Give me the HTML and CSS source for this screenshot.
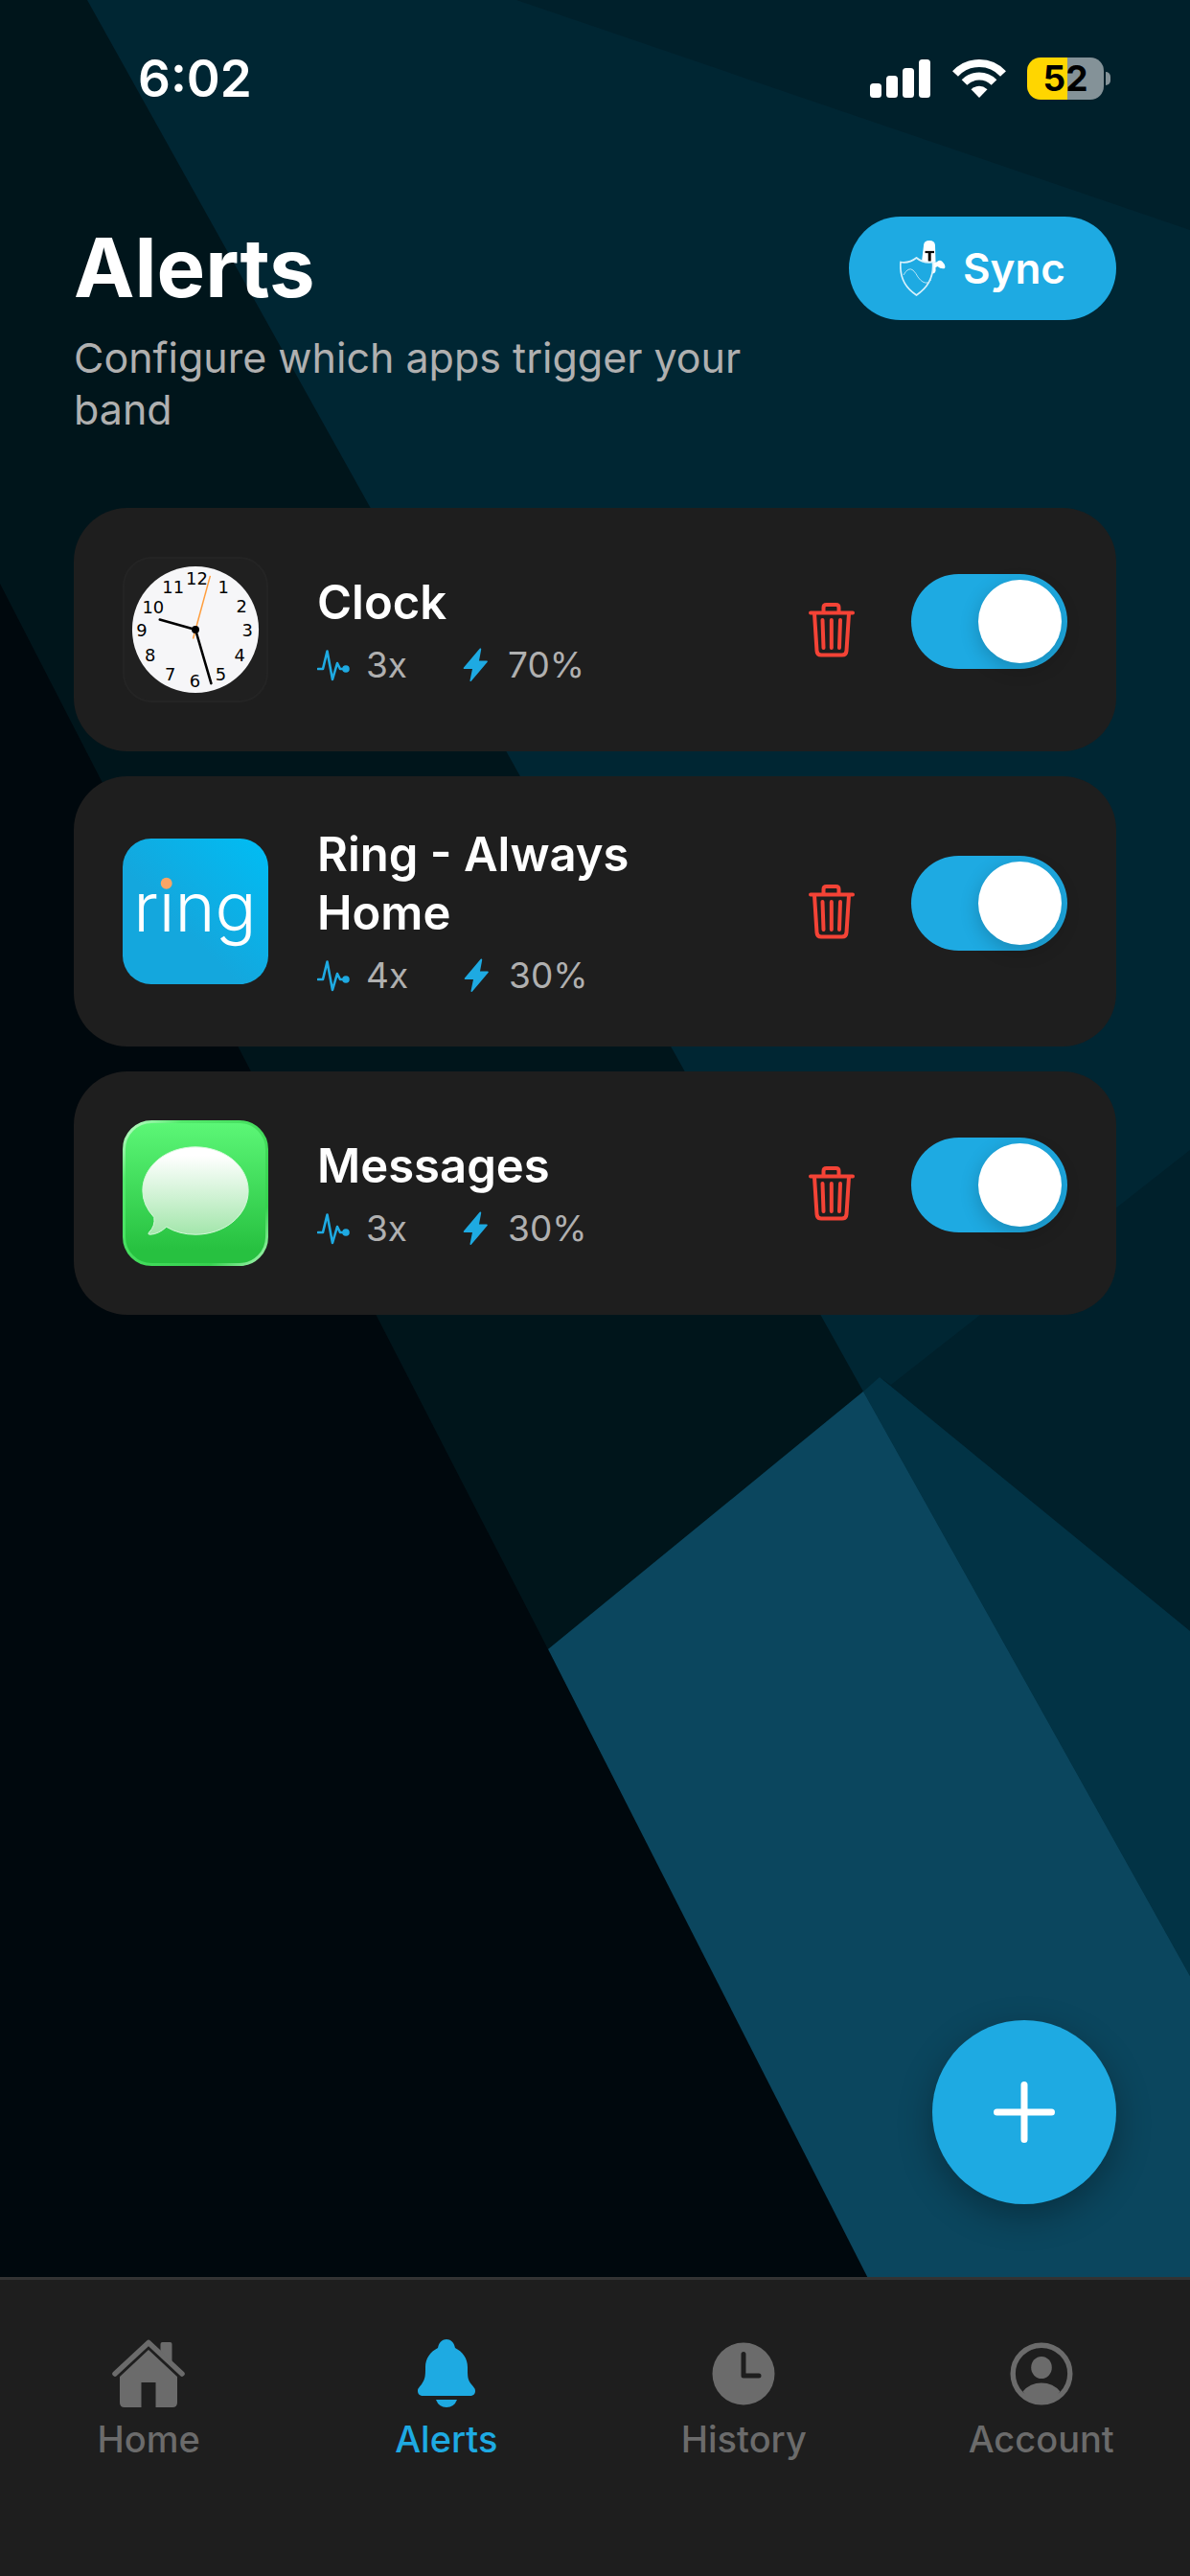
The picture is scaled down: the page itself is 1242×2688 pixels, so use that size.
FILE: index.html
```
<!DOCTYPE html>
<html lang="en">

<head>
    <meta charset="UTF-8">
    <meta name="viewport" content="width=device-width, initial-scale=1.0">
    <title>Alerts</title>
    <link rel="stylesheet" href="styles.css">
</head>

<body>

    <!-- Background facets -->
    <svg class="backdrop" viewBox="0 0 1242 2688" preserveAspectRatio="none" aria-hidden="true">
        <rect width="1242" height="2688" fill="#002633" />
        <polygon points="539,0 1242,0 1242,240" fill="#00202b" />
        <polygon points="918,1437 930,1445 1242,1200 1242,1702" fill="#00202b" />
        <polygon points="0,0 91,0 901,1452 572,1721 0,900" fill="#00151b" />
        <polygon points="901,1452 918,1437 1242,1702 1242,2062" fill="#023345" />
        <polygon points="572,1721 901,1452 1242,2062 1242,2688 1060,2688" fill="#0b465e" />
        <polygon points="0,609 572,1721 1064,2688 0,2688" fill="#00080d" />
    </svg>

    <!-- Shared icons -->
    <svg class="icon-defs" aria-hidden="true">
        <symbol id="icon-pulse" viewBox="0 0 34 36">
            <path d="M1 22h5l4.500-18.500L16 33l5-17 3 6h6" fill="none" stroke="currentColor" stroke-width="2.600" stroke-linecap="round" stroke-linejoin="round" />
            <circle cx="30" cy="22" r="3.800" fill="currentColor" />
        </symbol>
        <symbol id="icon-bolt" viewBox="0 0 34 36">
            <path d="M21.500 1L5 20.500c-.6.8-.3 1.500.7 1.500H14l-2.500 12c-.2 1.200.8 1.500 1.500.6L29.500 15c.7-.8.3-1.500-.7-1.500H21L23.200 1.800C23.400.6 22.300 0 21.500 1z" fill="currentColor" />
        </symbol>
        <symbol id="icon-trash" viewBox="0 0 48 57">
            <g fill="none" stroke="currentColor" stroke-width="4" stroke-linecap="round" stroke-linejoin="round">
                <path d="M2 10.500h44" />
                <path d="M15.500 10V5q0-3 3-3h10q3 0 3 3v5" />
                <path d="M6 11l2.500 39q.3 4.500 4.500 4.500h22q4.200 0 4.500-4.500L42 11" />
                <path d="M14.500 18l1 29M23.800 18v29M33 18l-1 29" />
            </g>
        </symbol>
    </svg>

    <div class="status-bar">
        <time class="status-time">6:02</time>
        <div class="status-icons">
            <svg width="64" height="42" viewBox="0 0 64 42" fill="#fff" aria-hidden="true">
                <rect x="0" y="26" width="12" height="15" rx="3.500" />
                <rect x="17" y="18" width="12" height="23" rx="3.500" />
                <rect x="34" y="10" width="12" height="31" rx="3.500" />
                <rect x="51" y="1" width="12" height="40" rx="3.500" />
            </svg>
            <svg width="56" height="42" viewBox="0 0 56 42" aria-hidden="true">
                <g fill="none" stroke="#fff" stroke-width="8">
                    <path d="M3 16Q13 5 28 5t25 11" />
                    <path d="M12.500 25Q19 18.500 28 18.500T43.500 25" />
                </g>
                <path d="M28 41l-8.500-8.800Q28 25.500 36.500 32.200z" fill="#fff" />
            </svg>
            <div class="battery">52</div>
        </div>
    </div>

    <header class="page-header">
        <div class="page-heading">
            <h1>Alerts</h1>
            <p>Configure which apps trigger your band</p>
        </div>
        <button class="sync-button" type="button">
            <svg width="48" height="58" viewBox="0 0 48 58" aria-hidden="true">
                <path d="M25 5.500Q25 0 31 0t6 5.500L37.500 22H23z" fill="#fff" />
                <path d="M26.500 12h9.500" stroke="#0a0a0a" stroke-width="2.200" />
                <path d="M31.200 12v9.500" stroke="#0a0a0a" stroke-width="3" />
                <path d="M35 22l3.500.5q3-3 6-.5 4 4 2.500 7-4 1-7.500-2l-2 1v4q-1 3-4 2.500z" fill="#fff" />
                <path d="M1 22.500q9 1.500 16.500-4.500 7 6 17 4.500 2 22-17 34.500Q-1 45 1 22.500z" fill="#1eaae2" stroke="#d8f1fb" stroke-width="1.700" />
                <path d="M4 36q5-9 10-5 3 3 5 7 5 7 10 6l4-3" fill="none" stroke="#b5e4f6" stroke-width="1" />
            </svg>
            Sync
        </button>
    </header>

    <main class="content">
        <ul class="alert-list">
            <li class="alert-card">
                <svg class="app-icon" viewBox="0 0 153 153" aria-hidden="true">
                    <rect x="1" y="1" width="151" height="151" rx="30" fill="#202020" stroke="#242424" stroke-width="2" />
                    <circle cx="76.500" cy="76.500" r="66.500" fill="#f6f6f8" />
                    <g class="clock-numbers">
                        <text x="78" y="29">12</text>
                        <text x="106" y="38">1</text>
                        <text x="125" y="58">2</text>
                        <text x="131" y="84">3</text>
                        <text x="123" y="110">4</text>
                        <text x="103" y="130">5</text>
                        <text x="76" y="137">6</text>
                        <text x="50" y="130">7</text>
                        <text x="29" y="110">8</text>
                        <text x="20" y="84">9</text>
                        <text x="32" y="59">10</text>
                        <text x="53" y="38">11</text>
                    </g>
                    <path d="M74 86L92 20" stroke="#ff9d3c" stroke-width="1.500" />
                    <path d="M76.500 76.500L39 66M76.500 76.500L93 133" stroke="#000" stroke-width="2.600" stroke-linecap="round" />
                    <circle cx="76.500" cy="76.500" r="4" />
                </svg>
                <div class="alert-info">
                    <label class="alert-name" for="clockToggle">Clock</label>
                    <div class="alert-meta">
                        <span class="meta-item"><svg><use href="#icon-pulse" /></svg>3x</span>
                        <span class="meta-item"><svg><use href="#icon-bolt" /></svg>70%</span>
                    </div>
                </div>
                <button class="delete-button" type="button" aria-label="Delete Clock"><svg><use href="#icon-trash" /></svg></button>
                <input class="toggle" type="checkbox" id="clockToggle" checked>
            </li>

            <li class="alert-card">
                <svg class="app-icon" viewBox="0 0 153 153" aria-hidden="true">
                    <defs>
                        <linearGradient id="ringFill" x1="0" y1="1" x2="1" y2="0">
                            <stop offset="0.4" stop-color="#14a7dd" />
                            <stop offset="1" stop-color="#00bdf4" />
                        </linearGradient>
                    </defs>
                    <rect width="153" height="153" rx="30" fill="url(#ringFill)" />
                    <text class="ring-logo" x="76" y="98">ring</text>
                    <circle cx="46" cy="47" r="6" fill="#f9a565" />
                </svg>
                <div class="alert-info">
                    <label class="alert-name" for="ringToggle">Ring - Always Home</label>
                    <div class="alert-meta">
                        <span class="meta-item"><svg><use href="#icon-pulse" /></svg>4x</span>
                        <span class="meta-item"><svg><use href="#icon-bolt" /></svg>30%</span>
                    </div>
                </div>
                <button class="delete-button" type="button" aria-label="Delete Ring"><svg><use href="#icon-trash" /></svg></button>
                <input class="toggle" type="checkbox" id="ringToggle" checked>
            </li>

            <li class="alert-card">
                <svg class="app-icon" viewBox="0 0 153 153" aria-hidden="true">
                    <defs>
                        <linearGradient id="msgFill" x1="0" y1="0" x2="0" y2="1">
                            <stop offset="0" stop-color="#5cf777" />
                            <stop offset="0.9" stop-color="#27c140" />
                        </linearGradient>
                        <linearGradient id="msgEdge" x1="0" y1="0" x2="1" y2="1">
                            <stop offset="0" stop-color="#c9ffd2" />
                            <stop offset="0.2" stop-color="#53e96c" />
                            <stop offset="0.8" stop-color="#36d14f" />
                            <stop offset="1" stop-color="#a9f7b5" />
                        </linearGradient>
                        <linearGradient id="bubbleFill" x1="0" y1="0" x2="0" y2="1">
                            <stop offset="0.1" stop-color="#fff" />
                            <stop offset="1" stop-color="#a3e6ab" />
                        </linearGradient>
                    </defs>
                    <rect x="1.500" y="1.500" width="150" height="150" rx="29" fill="url(#msgFill)" stroke="url(#msgEdge)" stroke-width="3" />
                    <path d="M76.500 28C107 28 132 48 132 74s-25 46-55.500 46q-17 0-30.500-8-8 7.500-17 8-3 0-1.500-2 7-7 5.500-16Q21 89 21 74c0-26 25-46 55.500-46z" fill="url(#bubbleFill)" stroke="#d5f8da" stroke-width="1" />
                </svg>
                <div class="alert-info">
                    <label class="alert-name" for="messagesToggle">Messages</label>
                    <div class="alert-meta">
                        <span class="meta-item"><svg><use href="#icon-pulse" /></svg>3x</span>
                        <span class="meta-item"><svg><use href="#icon-bolt" /></svg>30%</span>
                    </div>
                </div>
                <button class="delete-button" type="button" aria-label="Delete Messages"><svg><use href="#icon-trash" /></svg></button>
                <input class="toggle" type="checkbox" id="messagesToggle" checked>
            </li>
        </ul>

        <button class="add-button" type="button" aria-label="Add alert">
            <svg width="64" height="64" viewBox="0 0 64 64" aria-hidden="true">
                <path d="M32 3.500v57M3.500 32h57" stroke="#fff" stroke-width="7" stroke-linecap="round" />
            </svg>
        </button>
    </main>

    <nav class="tab-bar">
        <a class="tab" href="#home">
            <svg viewBox="0 0 76 72" aria-hidden="true">
                <path d="M3 36L38 3.500 73 36" fill="none" stroke="currentColor" stroke-width="5.500" stroke-linecap="round" stroke-linejoin="round" />
                <path d="M50.500 12V5q0-2 2-2h8q2 0 2 2v20z" fill="currentColor" />
                <path d="M38 11l30 28v27q0 5-5 5H45.500V45h-15v26H13q-5 0-5-5V39z" fill="currentColor" />
            </svg>
            Home
        </a>
        <a class="tab active" href="#alerts">
            <svg viewBox="0 0 76 72" aria-hidden="true">
                <path d="M29 9c1-6 5-9 9-9s8 3 9 9c8 4 13 11 13 20 0 10 0 13 4 18 3 4 4 4 4 7 0 3-2 5-6 5H14c-4 0-6-2-6-5s1-3 4-7c4-6 4-9 4-18 0-9 5-16 13-20z" fill="currentColor" />
                <path d="M27 63h22q-3 8-11 8t-11-8z" fill="currentColor" />
            </svg>
            Alerts
        </a>
        <a class="tab" href="#history">
            <svg viewBox="0 0 76 72" aria-hidden="true">
                <circle cx="38" cy="36" r="32.500" fill="currentColor" />
                <path d="M38 15.500V38h16" fill="none" stroke="#1e1e1e" stroke-width="5" stroke-linecap="round" stroke-linejoin="round" />
            </svg>
            History
        </a>
        <a class="tab" href="#account">
            <svg viewBox="0 0 76 72" aria-hidden="true">
                <circle cx="38" cy="36" r="29.800" fill="none" stroke="currentColor" stroke-width="5.400" />
                <ellipse cx="38" cy="29.500" rx="10.800" ry="11.500" fill="currentColor" />
                <path d="M18.500 54.500Q26 45.500 38 45.500t19.500 9Q50 67 38 67T18.500 54.500z" fill="currentColor" />
            </svg>
            Account
        </a>
    </nav>

</body>

</html>
```
FILE: styles.css
```
* {
    box-sizing: border-box;
}

body {
    margin: 0;
    min-height: 100vh;
    display: flex;
    flex-direction: column;
    position: relative;
    background-color: #00080d;
    color: #fff;
    font-family: Inter, "Liberation Sans", sans-serif;
}

h1,
p,
ul {
    margin: 0;
    padding: 0;
}

button {
    border: none;
    padding: 0;
    font-family: inherit;
    color: inherit;
    cursor: pointer;
}

svg {
    display: block;
    flex-shrink: 0;
}

.backdrop {
    position: absolute;
    top: 0;
    left: 0;
    width: 100%;
    height: 100%;
    z-index: -1;
}

.icon-defs {
    position: absolute;
    width: 0;
    height: 0;
}

/* Status bar */
.status-bar {
    display: flex;
    justify-content: space-between;
    align-items: center;
    height: 164px;
    padding: 0 83px 0 144px;
}

.status-time {
    font-size: 53px;
    font-weight: 600;
}

.status-icons {
    display: flex;
    align-items: center;
    gap: 22px;
}

.battery {
    position: relative;
    width: 80px;
    height: 44px;
    margin-right: 7px;
    border-radius: 14px;
    background: linear-gradient(to right, #ffd600 52%, #849298 52%);
    color: #000;
    font-size: 37px;
    font-weight: 700;
    line-height: 44px;
    text-align: center;
}

.battery::after {
    content: '';
    position: absolute;
    top: 15px;
    right: -7px;
    width: 5px;
    height: 14px;
    border-radius: 0 5px 5px 0;
    background-color: #849298;
}

/* Header */
.page-header {
    display: flex;
    justify-content: space-between;
    align-items: flex-start;
    gap: 77px;
    padding: 62px 77px 76px;
}

.page-heading h1 {
    font-size: 85px;
    font-weight: 700;
    line-height: 108px;
    margin-bottom: 12px;
}

.page-heading p {
    font-size: 43px;
    line-height: 54px;
    color: #b0b0b0;
}

.sync-button {
    display: flex;
    flex-shrink: 0;
    align-items: center;
    gap: 18px;
    height: 108px;
    padding: 0 53px;
    border-radius: 54px;
    background-color: #1eaae2;
    font-size: 44px;
    font-weight: 600;
}

/* Alerts */
.content {
    flex: 1;
    position: relative;
    padding: 0 77px;
}

.alert-list {
    display: flex;
    flex-direction: column;
    gap: 26px;
    list-style: none;
}

.alert-card {
    display: flex;
    align-items: center;
    gap: 51px;
    padding: 51px;
    border-radius: 56px;
    background-color: #1e1e1e;
}

.app-icon {
    width: 152px;
    height: 152px;
}

.clock-numbers {
    font-family: "DejaVu Sans", sans-serif;
    font-size: 18px;
    text-anchor: middle;
}

.ring-logo {
    font-size: 72px;
    font-weight: 300;
    text-anchor: middle;
    fill: #fff;
}

.alert-info {
    flex: 1;
}

.alert-name {
    display: block;
    margin-bottom: 12px;
    font-size: 49px;
    font-weight: 600;
    line-height: 61px;
}

.alert-meta {
    display: flex;
    gap: 54px;
}

.meta-item {
    display: flex;
    align-items: center;
    gap: 17px;
    font-size: 37px;
    line-height: 46px;
    color: #b0b0b0;
}

.meta-item svg {
    width: 34px;
    height: 36px;
    color: #1eaae2;
}

.delete-button {
    display: flex;
    justify-content: center;
    width: 64px;
    background: none;
    color: #f44336;
}

.delete-button svg {
    width: 48px;
    height: 57px;
}

.toggle {
    appearance: none;
    position: relative;
    flex-shrink: 0;
    width: 163px;
    height: 99px;
    margin: 0 0 18px;
    border-radius: 50px;
    background-color: #767577;
    cursor: pointer;
}

.toggle::before {
    content: '';
    position: absolute;
    top: 6px;
    left: 6px;
    width: 87px;
    height: 87px;
    border-radius: 50%;
    background-color: #fff;
    box-shadow: 0 6px 20px rgba(0, 0, 0, 0.2);
}

.toggle:checked {
    background-color: #1eaae2;
}

.toggle:checked::before {
    left: 70px;
}

.add-button {
    position: absolute;
    right: 77px;
    bottom: 76px;
    display: flex;
    justify-content: center;
    align-items: center;
    width: 192px;
    height: 192px;
    border-radius: 50%;
    background-color: #1eaae2;
    box-shadow: 0 12px 36px rgba(0, 0, 0, 0.3);
}

/* Bottom tabs */
.tab-bar {
    display: flex;
    padding: 62px 0 120px;
    border-top: 3px solid #333;
    background-color: #1e1e1e;
}

.tab {
    flex: 1;
    display: flex;
    flex-direction: column;
    align-items: center;
    gap: 9px;
    color: #6b6b6b;
    font-size: 38px;
    font-weight: 500;
    line-height: 46px;
    text-decoration: none;
}

.tab svg {
    width: 76px;
    height: 72px;
}

.tab.active {
    color: #1eaae2;
}
```
